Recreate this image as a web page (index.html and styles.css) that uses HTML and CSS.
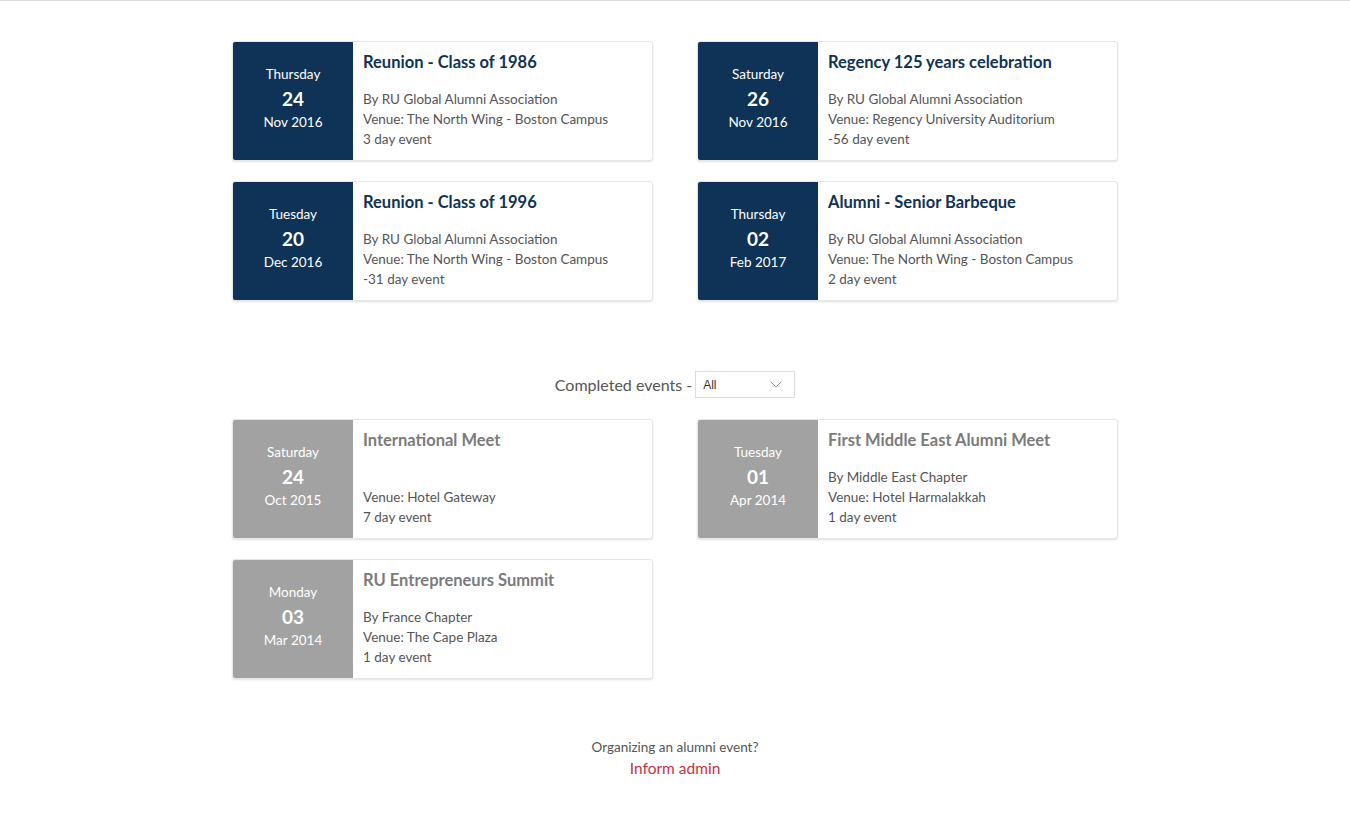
FILE: index.html
```html
<!DOCTYPE html>
<html>
<head>
<meta charset="utf-8">
<link rel="stylesheet" href="styles.css">
</head>
<body>
<div class="topline"></div>
<main class="wrap">
  <section class="grid">
    <div class="card">
      <div class="date"><span class="dow">Thursday</span><span class="num">24</span><span class="my">Nov 2016</span></div>
      <div class="info"><h3>Reunion - Class of 1986</h3><div class="lines"><p>By RU Global Alumni Association</p><p>Venue: The North Wing - Boston Campus</p><p>3 day event</p></div></div>
    </div>
    <div class="card">
      <div class="date"><span class="dow">Saturday</span><span class="num">26</span><span class="my">Nov 2016</span></div>
      <div class="info"><h3>Regency 125 years celebration</h3><div class="lines"><p>By RU Global Alumni Association</p><p>Venue: Regency University Auditorium</p><p>-56 day event</p></div></div>
    </div>
    <div class="card">
      <div class="date"><span class="dow">Tuesday</span><span class="num">20</span><span class="my">Dec 2016</span></div>
      <div class="info"><h3>Reunion - Class of 1996</h3><div class="lines"><p>By RU Global Alumni Association</p><p>Venue: The North Wing - Boston Campus</p><p>-31 day event</p></div></div>
    </div>
    <div class="card">
      <div class="date"><span class="dow">Thursday</span><span class="num">02</span><span class="my">Feb 2017</span></div>
      <div class="info"><h3>Alumni - Senior Barbeque</h3><div class="lines"><p>By RU Global Alumni Association</p><p>Venue: The North Wing - Boston Campus</p><p>2 day event</p></div></div>
    </div>
  </section>

  <div class="filter">
    <span class="filter-label">Completed events -</span>
    <div class="select"><span>All</span>
      <svg width="12" height="7" viewBox="0 0 12 7"><path d="M0.5 0.5 L6 6 L11.5 0.5" fill="none" stroke="#999" stroke-width="1"/></svg>
    </div>
  </div>

  <section class="grid past">
    <div class="card">
      <div class="date"><span class="dow">Saturday</span><span class="num">24</span><span class="my">Oct 2015</span></div>
      <div class="info"><h3>International Meet</h3><div class="lines"><p>&nbsp;</p><p>Venue: Hotel Gateway</p><p>7 day event</p></div></div>
    </div>
    <div class="card">
      <div class="date"><span class="dow">Tuesday</span><span class="num">01</span><span class="my">Apr 2014</span></div>
      <div class="info"><h3>First Middle East Alumni Meet</h3><div class="lines"><p>By Middle East Chapter</p><p>Venue: Hotel Harmalakkah</p><p>1 day event</p></div></div>
    </div>
    <div class="card">
      <div class="date"><span class="dow">Monday</span><span class="num">03</span><span class="my">Mar 2014</span></div>
      <div class="info"><h3>RU Entrepreneurs Summit</h3><div class="lines"><p>By France Chapter</p><p>Venue: The Cape Plaza</p><p>1 day event</p></div></div>
    </div>
  </section>

  <footer class="foot">
    <p class="q">Organizing an alumni event?</p>
    <a class="inform">Inform admin</a>
  </footer>
</main>
</body>
</html>
```

FILE: styles.css
```css
html, body {
  margin: 0;
  padding: 0;
  background: #fff;
  font-family: Lato, "Open Sans", Arial, sans-serif;
  color: #555;
}
.topline {
  height: 1px;
  background: #dcdcdc;
}
.wrap {
  width: 886px;
  margin: 0 auto;
  padding-top: 40px;
}
.grid {
  display: grid;
  grid-template-columns: 421px 421px;
  column-gap: 44px;
  row-gap: 20px;
}
.card {
  display: flex;
  height: 120px;
  box-sizing: border-box;
  border: 1px solid #e6e6e6;
  border-radius: 3px;
  box-shadow: 0 1px 2px rgba(0,0,0,0.12);
  overflow: hidden;
  background: #fff;
}
.date {
  width: 120px;
  flex: none;
  background: #0e3356;
  color: #fff;
  display: flex;
  flex-direction: column;
  align-items: center;
  justify-content: center;
  padding-bottom: 6px;
  box-sizing: border-box;
}
.past .date { background: #a2a2a2; }
.dow { font-size: 13.5px; line-height: 16px; }
.num { font-size: 19px; font-weight: 700; line-height: 22px; margin: 6px 0 4px; }
.my { font-size: 13.5px; line-height: 16px; }
.info {
  padding: 10px 10px 0 10px;
}
.info h3 {
  margin: 0;
  font-size: 16.5px;
  line-height: 20px;
  font-weight: 700;
  color: #0f3355;
}
.past .info h3 { color: #7b7b7b; }
.lines { margin-top: 17px; }
.lines p {
  margin: 0;
  font-size: 13.5px;
  line-height: 20px;
  color: #555;
}
.filter {
  display: flex;
  justify-content: center;
  align-items: center;
  gap: 3px;
  margin: 70px 0 21px;
}
.filter-label { font-size: 16px; color: #555; }
.select {
  width: 100px;
  height: 27px;
  box-sizing: border-box;
  border: 1px solid #dcdcdc;
  display: flex;
  align-items: center;
  justify-content: space-between;
  padding: 0 12px 0 7px;
  font-family: Arial, "Liberation Sans", sans-serif;
  font-size: 12px;
  color: #333;
}
.foot {
  text-align: center;
  padding-top: 59px;
}
.foot .q { margin: 0; font-size: 13.5px; line-height: 18px; color: #555; }
.inform {
  display: inline-block;
  margin-top: 3px;
  font-size: 15.5px;
  color: #c8313f;
}
```
